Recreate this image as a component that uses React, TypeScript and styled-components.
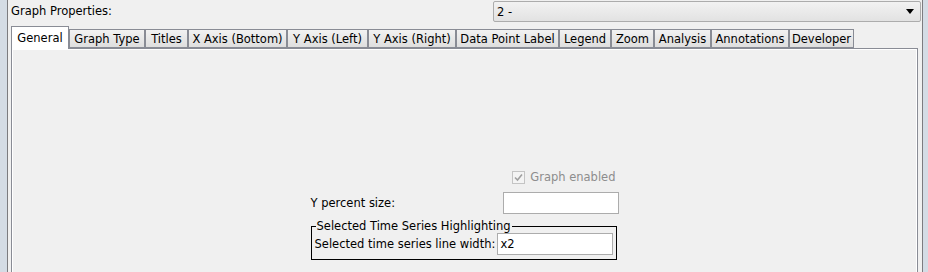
import * as React from "react";
import styled, { createGlobalStyle } from "styled-components";

const GlobalStyle = createGlobalStyle`
  html, body {
    margin: 0;
    padding: 0;
    width: 928px;
    height: 272px;
    overflow: hidden;
    background: #d4dce5;
  }
  body {
    font-family: "DejaVu Sans", Tahoma, sans-serif;
    font-size: 11.5px;
    color: #000;
  }
`;

const Frame = styled.div`
  width: 928px;
  height: 272px;
  box-sizing: border-box;
  padding-left: 7px;
  padding-right: 5px;
  display: flex;
`;

const Panel = styled.div`
  flex: 1;
  background: #f0f0f0;
  border-left: 1px solid #7c7c80;
  border-right: 1px solid #7c7c80;
  display: flex;
  flex-direction: column;
  overflow: hidden;
`;

const TopRow = styled.div`
  display: flex;
  align-items: flex-start;
  justify-content: space-between;
  height: 22px;
  padding: 1px 1px 0 3px;
`;

const Label = styled.span<{ $disabled?: boolean }>`
  white-space: nowrap;
  line-height: 14px;
  align-self: center;
  color: ${(p) => (p.$disabled ? "#8d8d8d" : "#000")};
`;

const Title = styled(Label)`
  align-self: flex-start;
  padding-top: 3px;
`;

const Select = styled.div`
  width: 428px;
  height: 21px;
  box-sizing: border-box;
  border: 1px solid #acacac;
  border-radius: 2px;
  background: linear-gradient(#f2f2f2, #e2e2e2);
  display: flex;
  align-items: center;
  justify-content: space-between;
  padding: 0 6px 0 3px;
`;

const Arrow = styled.div`
  width: 0;
  height: 0;
  border-left: 4px solid transparent;
  border-right: 4px solid transparent;
  border-top: 5px solid #000;
`;

const TabStrip = styled.div`
  display: flex;
  align-items: flex-end;
  height: 22px;
  margin-top: 3px;
  padding-left: 3px;
  position: relative;
  z-index: 1;
`;

const Tab = styled.div<{ $w: number; $active?: boolean }>`
  width: ${(p) => p.$w}px;
  box-sizing: border-box;
  height: ${(p) => (p.$active ? 23 : 19)}px;
  margin-bottom: ${(p) => (p.$active ? -1 : 0)}px;
  border: 1px solid #898c95;
  border-bottom: ${(p) => (p.$active ? "none" : "1px solid #898c95")};
  background: ${(p) => (p.$active ? "#fff" : "linear-gradient(#f2f2f2, #dedede)")};
  display: flex;
  align-items: ${(p) => (p.$active ? "flex-start" : "center")};
  padding-top: ${(p) => (p.$active ? 4 : 1)}px;
  justify-content: center;
  white-space: nowrap;
`;

const TabBody = styled.div`
  margin: 0 4px 0 3px;
  flex: 1;
  border: 1px solid #898c95;
  border-bottom: none;
  box-shadow: inset 1px 1px 0 #fff, inset -1px 0 0 #fff;
  display: flex;
  justify-content: center;
  align-items: flex-start;
  padding-top: 121px;
`;

const Form = styled.div`
  display: grid;
  grid-template-columns: 192px 116px;
  row-gap: 0;
  align-items: start;
  width: 308px;
`;

const CheckRow = styled.label`
  grid-column: 2;
  display: flex;
  align-items: center;
  gap: 5px;
  height: 14px;
  justify-self: end;
  margin: 0 3px 8px 0;
`;

const CheckBox = styled.span`
  width: 13px;
  height: 13px;
  box-sizing: border-box;
  border: 1px solid #c4c4c4;
  background: #f4f4f4;
  display: flex;
  align-items: center;
  justify-content: center;
`;

const Input = styled.div<{ $w: number }>`
  width: ${(p) => p.$w}px;
  height: 22px;
  box-sizing: border-box;
  border: 1px solid #acacac;
  background: #fff;
  padding: 2px 3px;
  display: flex;
  align-items: center;
`;

const Group = styled.fieldset`
  grid-column: 1 / span 2;
  margin: 5px 2px 0 0;
  padding: 0 3px 4px 3px;
  border: 1px solid #000;
  display: flex;
  align-items: center;
  justify-content: space-between;
`;

const Legend = styled.legend`
  padding: 0 1px;
  margin-left: 1px;
  line-height: 14px;
`;

const tabs: [string, number][] = [
  ["General", 58],
  ["Graph Type", 76],
  ["Titles", 43],
  ["X Axis (Bottom)", 99],
  ["Y Axis (Left)", 81],
  ["Y Axis (Right)", 88],
  ["Data Point Label", 103],
  ["Legend", 52],
  ["Zoom", 43],
  ["Analysis", 57],
  ["Annotations", 78],
  ["Developer", 65],
];

const App = () => (
  <Frame>
    <GlobalStyle />
    <Panel>
      <TopRow>
        <Title>Graph Properties:</Title>
        <Select>
          <span>2 -</span>
          <Arrow />
        </Select>
      </TopRow>
      <TabStrip>
        {tabs.map(([name, w], i) => (
          <Tab key={name} $w={w} $active={i === 0}>
            {name}
          </Tab>
        ))}
      </TabStrip>
      <TabBody>
        <Form>
          <CheckRow>
            <CheckBox>
              <svg width="9" height="9" viewBox="0 0 9 9">
                <path d="M1 4.5 L3.5 7 L8 1.5" fill="none" stroke="#a0a0a0" strokeWidth="1.6" />
              </svg>
            </CheckBox>
            <Label $disabled>Graph enabled</Label>
          </CheckRow>
          <Label>Y percent size:</Label>
          <Input $w={116} />
          <Group>
            <Legend>Selected Time Series Highlighting</Legend>
            <Label>Selected time series line width:</Label>
            <Input $w={116}>x2</Input>
          </Group>
        </Form>
      </TabBody>
    </Panel>
  </Frame>
);

export default App;
